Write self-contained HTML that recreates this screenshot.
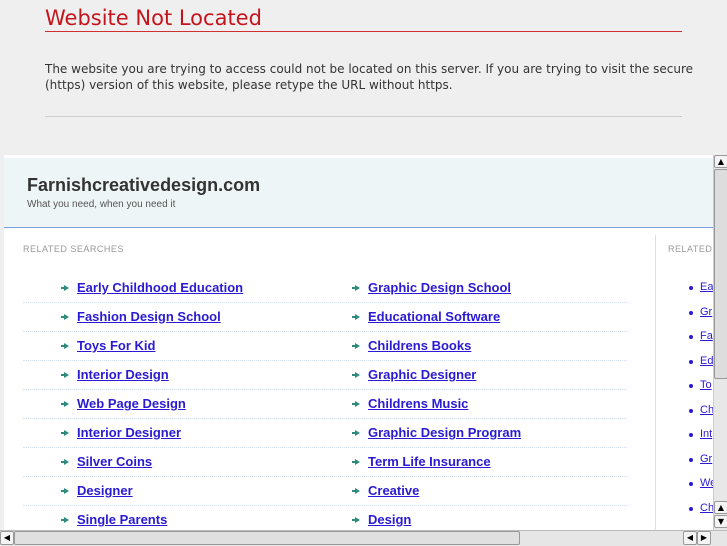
<!DOCTYPE html>
<html><head><style>
body{margin:0;width:727px;height:545px;overflow:hidden;background:#efefef;font-family:"DejaVu Sans",sans-serif;position:relative}
.t{position:absolute;left:45px;top:4px;font-size:21px;color:#c4151c;line-height:28px}
.rl{position:absolute;left:45px;top:31px;width:637px;height:1px;background:#d03030}
.p{position:absolute;left:45px;top:61px;font-size:12px;line-height:16px;color:#333;width:650px}
.gl{position:absolute;left:45px;top:116px;width:637px;height:1px;background:#ccc}
.fr{position:absolute;left:4px;top:155px;width:709px;height:375px;background:#fff;overflow:hidden;font-family:"Liberation Sans",sans-serif}
.hd{position:absolute;left:0;top:3px;width:709px;height:69px;background:#eef5f7;border-bottom:1px solid #7d9ee0}
.hd b{position:absolute;left:23px;top:17px;font-size:18px;color:#333}
.hd span{position:absolute;left:23px;top:41px;font-size:10px;color:#555}
.lab{position:absolute;font-size:9px;color:#999;letter-spacing:.5px}
.a{position:absolute;font-size:13px;font-weight:bold;color:#2a1ad3;text-decoration:underline;white-space:nowrap}
.ar{position:absolute;width:0;height:0;border-left:5px solid #2e8a7c;border-top:3px solid transparent;border-bottom:3px solid transparent}
.ar:before{content:"";position:absolute;left:-8px;top:-1px;width:4px;height:2px;background:#2e8a7c}
.dl{position:absolute;left:19px;width:604px;border-top:1px dotted #d0def0}
.vd{position:absolute;left:651px;top:80px;width:1px;height:300px;background:#d6e0f0}
.b{position:absolute;font-size:11px;color:#2a1ad3;text-decoration:underline;white-space:nowrap}
.bu{position:absolute;width:4px;height:4px;border-radius:2px;background:#2a1ad3}
.vs{position:absolute;left:713px;top:155px;width:14px;height:375px;background:#e8e8e8;border-left:1px solid #ccc}
.hs{position:absolute;left:0;top:530px;width:727px;height:15px;background:#e6e6e6;border-top:1px solid #bbb}
.btn{position:absolute;background:#f4f4f4;border:1px solid #999;border-radius:2px;box-sizing:border-box;font-size:8px;text-align:center;line-height:12px;color:#000}
</style></head><body>
<div class="t">Website Not Located</div><div class="rl"></div>
<div class="p">The website you are trying to access could not be located on this server. If you are trying to visit the secure (https) version of this website, please retype the URL without https.</div>
<div class="gl"></div>
<div class="fr">
<div class="hd"><b>Farnishcreativedesign.com</b><span>What you need, when you need it</span></div>
<div class="lab" style="left:19px;top:89px">RELATED SEARCHES</div>
<div class="lab" style="left:664px;top:89px">RELATED</div>
<div class="vd"></div>
<div id="L"></div>
</div>
<div class="vs"><div class="btn" style="left:0;top:0;width:14px;height:13px">▲</div><div class="btn" style="left:0;top:14px;width:14px;height:210px;background:#ddd"></div><div class="btn" style="left:0;top:346px;width:14px;height:13px">▲</div><div class="btn" style="left:0;top:360px;width:14px;height:13px">▼</div></div>
<div class="hs"><div class="btn" style="left:0;top:0;width:14px;height:14px">◀</div><div class="btn" style="left:14px;top:0;width:506px;height:14px;background:#e0e0e0"></div><div class="btn" style="left:683px;top:0;width:14px;height:14px">◀</div><div class="btn" style="left:697px;top:0;width:14px;height:14px">▶</div></div>
<script>
var l=["Early Childhood Education","Fashion Design School","Toys For Kid","Interior Design","Web Page Design","Interior Designer","Silver Coins","Designer","Single Parents"];
var r=["Graphic Design School","Educational Software","Childrens Books","Graphic Designer","Childrens Music","Graphic Design Program","Term Life Insurance","Creative","Design"];
var s3=["Ea","Gr","Fa","Ed","To","Ch","Int","Gr","We","Ch"];
var h="";
for(var i=0;i<9;i++){var y=125+i*29;
h+='<div class="ar" style="left:60px;top:'+(y+5)+'px"></div><div class="a" style="left:73px;top:'+y+'px">'+l[i]+'</div>';
h+='<div class="ar" style="left:351px;top:'+(y+5)+'px"></div><div class="a" style="left:364px;top:'+y+'px">'+r[i]+'</div>';
if(i<8)h+='<div class="dl" style="top:'+(y+22)+'px"></div>';}
for(var j=0;j<10;j++){var y=126+j*24.5;h+='<div class="bu" style="left:685px;top:'+(y+5)+'px"></div><div class="b" style="left:696px;top:'+y+'px">'+s3[j]+'</div>';}
document.getElementById("L").innerHTML=h;
</script>
</body></html>
